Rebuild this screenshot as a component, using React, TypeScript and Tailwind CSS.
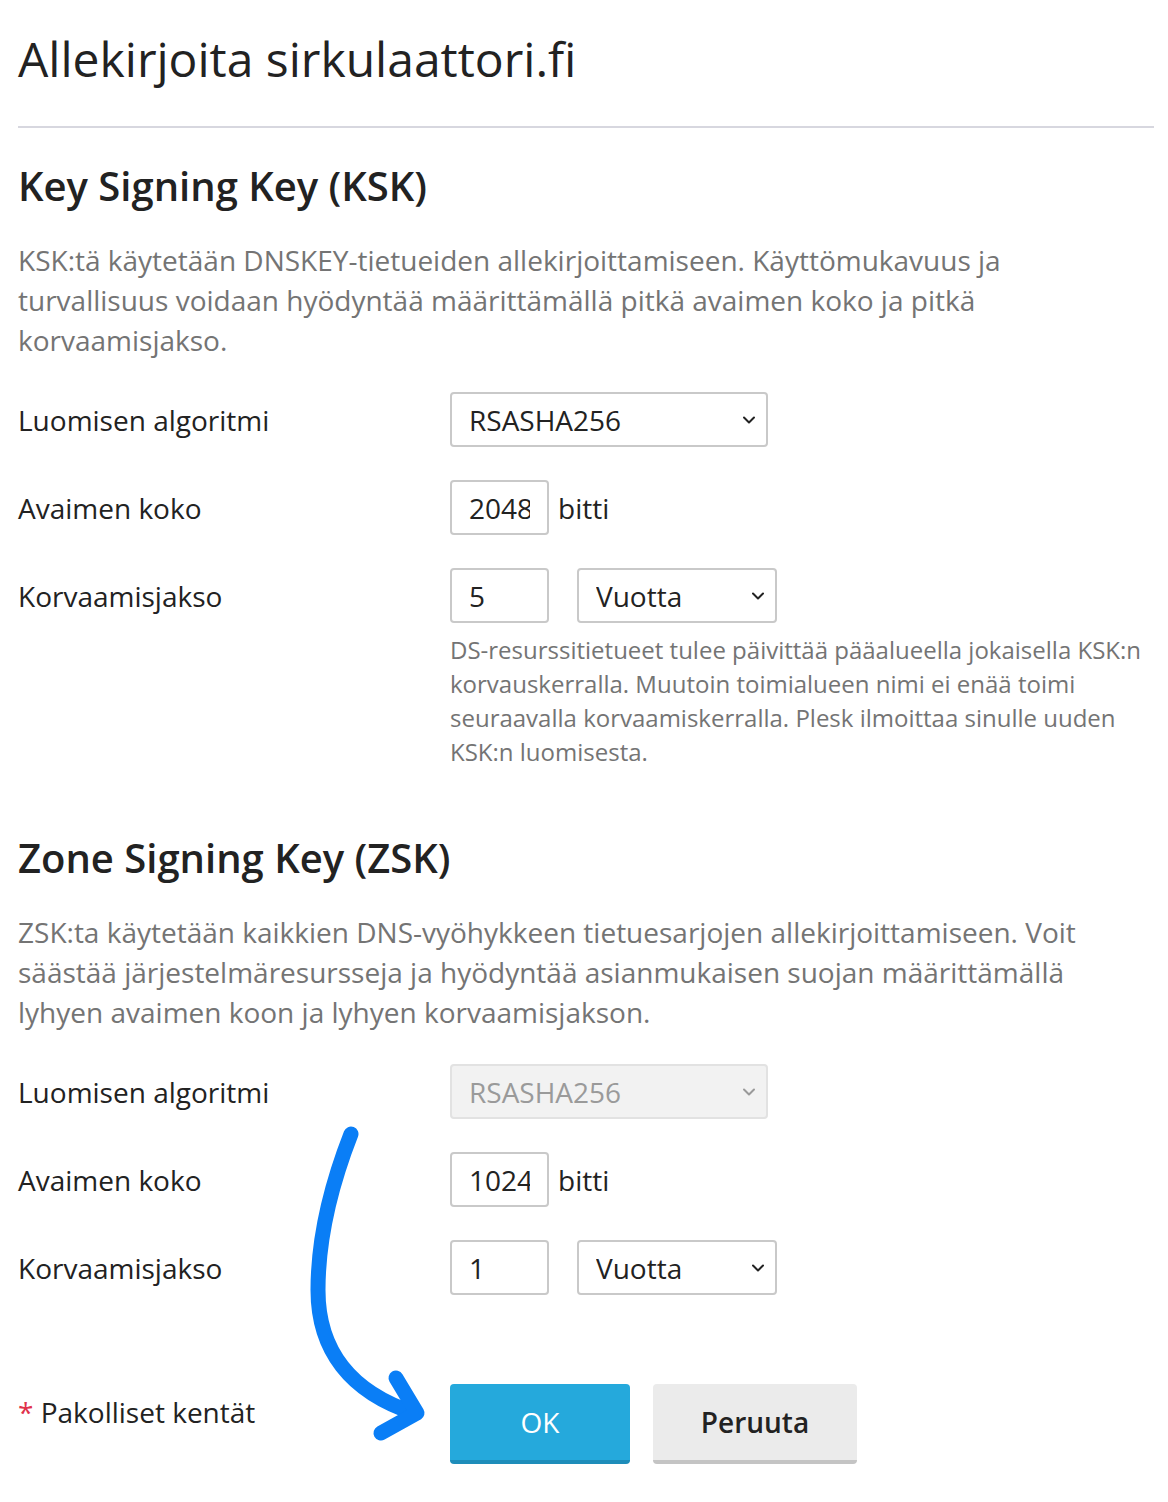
import { FC, ReactNode } from "react"

const Chevron: FC<{ muted?: boolean }> = ({ muted }) => (
  <svg
    className="pointer-events-none absolute right-[12px] top-1/2 -translate-y-1/2"
    width="14"
    height="9"
    viewBox="0 0 14 9"
    fill="none"
  >
    <path
      d="M2 2l5 5 5-5"
      stroke={muted ? "#9a9a9a" : "#222"}
      strokeWidth="2"
      strokeLinecap="round"
      strokeLinejoin="round"
    />
  </svg>
)

const Select: FC<{ value: string; width: string; disabled?: boolean }> = ({ value, width, disabled }) => (
  <div className={`relative ${width}`}>
    <select
      disabled={disabled}
      defaultValue={value}
      className={
        disabled
          ? "h-[55px] w-full appearance-none rounded-[4px] border-2 border-[#e2e2e2] bg-[#f2f2f2] pl-[17px] text-[28px] text-[#9a9a9a] outline-none"
          : "h-[55px] w-full appearance-none rounded-[4px] border-2 border-[#c9c9c9] bg-white pl-[17px] text-[28px] text-[#222] outline-none"
      }
    >
      <option>{value}</option>
    </select>
    <Chevron muted={disabled} />
  </div>
)

const NumInput: FC<{ value: string }> = ({ value }) => (
  <input
    defaultValue={value}
    className="h-[55px] w-[99px] rounded-[4px] border-2 border-[#c9c9c9] bg-white px-[17px] text-[28px] text-[#222] outline-none"
  />
)

const Row: FC<{ label: string; children: ReactNode }> = ({ label, children }) => (
  <div className="grid grid-cols-[432px_1fr] items-start">
    <div className="flex h-[55px] items-center text-[28px] text-[#222]">{label}</div>
    <div>{children}</div>
  </div>
)

const KeySection: FC<{
  title: string
  text: string
  disabled?: boolean
  size: string
  period: string
  help?: string
}> = ({ title, text, disabled, size, period, help }) => (
  <section>
    <h2 className="text-[40px] font-semibold leading-[44px] text-[#222]">{title}</h2>
    <p className="mt-[32px] text-[28px] leading-[40px] text-[#747474]">{text}</p>
    <div className="mt-[32px] flex flex-col gap-[33px]">
      <Row label="Luomisen algoritmi">
        <Select value="RSASHA256" width="w-[318px]" disabled={disabled} />
      </Row>
      <Row label="Avaimen koko">
        <div className="flex items-center gap-[9px]">
          <NumInput value={size} />
          <span className="text-[28px] text-[#222]">bitti</span>
        </div>
      </Row>
      <Row label="Korvaamisjakso">
        <div className="flex gap-[28px]">
          <NumInput value={period} />
          <Select value="Vuotta" width="w-[200px]" />
        </div>
        {help && (
          <p className="mt-[10px] text-[24px] leading-[34px] text-[#747474]">{help}</p>
        )}
      </Row>
    </div>
  </section>
)

const Arrow: FC = () => (
  <svg
    className="pointer-events-none absolute left-[290px] top-[1115px]"
    width="150"
    height="340"
    viewBox="290 1115 150 340"
    fill="none"
  >
    <path
      d="M351 1134 C 333 1180, 318 1235, 318 1290 C 318 1350, 350 1392, 414 1413"
      stroke="#0a7ef6"
      strokeWidth="15"
      strokeLinecap="round"
    />
    <path
      d="M396 1378 L 417 1413 L 381 1433"
      stroke="#0a7ef6"
      strokeWidth="15"
      strokeLinecap="round"
      strokeLinejoin="round"
    />
  </svg>
)

const App: FC = () => {
  return (
    <div className="relative min-h-[1502px] w-[1168px] bg-white font-['Open_Sans',sans-serif]">
      <div className="px-[18px] pt-[30px]">
        <h1 className="text-[48px] font-normal leading-[58px] text-[#222]">Allekirjoita sirkulaattori.fi</h1>
        <div className="mt-[38px] h-[2px] w-[1136px] bg-[#d7d7df]" />

        <div className="mt-[36px]">
          <KeySection
            title="Key Signing Key (KSK)"
            text="KSK:tä käytetään DNSKEY-tietueiden allekirjoittamiseen. Käyttömukavuus ja turvallisuus voidaan hyödyntää määrittämällä pitkä avaimen koko ja pitkä korvaamisjakso."
            size="2048"
            period="5"
            help="DS-resurssitietueet tulee päivittää pääalueella jokaisella KSK:n korvauskerralla. Muutoin toimialueen nimi ei enää toimi seuraavalla korvaamiskerralla. Plesk ilmoittaa sinulle uuden KSK:n luomisesta."
          />
        </div>

        <div className="mt-[67px]">
          <KeySection
            title="Zone Signing Key (ZSK)"
            text="ZSK:ta käytetään kaikkien DNS-vyöhykkeen tietuesarjojen allekirjoittamiseen. Voit säästää järjestelmäresursseja ja hyödyntää asianmukaisen suojan määrittämällä lyhyen avaimen koon ja lyhyen korvaamisjakson."
            disabled
            size="1024"
            period="1"
          />
        </div>

        <div className="mt-[89px] grid grid-cols-[432px_1fr] items-start">
          <div className="pt-[9px] text-[28px] leading-[38px] text-[#222]">
            <span className="text-[#e0314b]">*</span> Pakolliset kentät
          </div>
          <div className="flex gap-[23px]">
            <button className="h-[80px] w-[180px] rounded-[4px] border-b-[4px] border-[#1e8dba] bg-[#25a9dc] text-[28px] text-white">
              OK
            </button>
            <button className="h-[80px] w-[204px] rounded-[4px] border-b-[4px] border-[#c4c4c4] bg-[#ebebeb] text-[28px] font-semibold text-[#222]">
              Peruuta
            </button>
          </div>
        </div>
      </div>
      <Arrow />
    </div>
  )
}

export default App
